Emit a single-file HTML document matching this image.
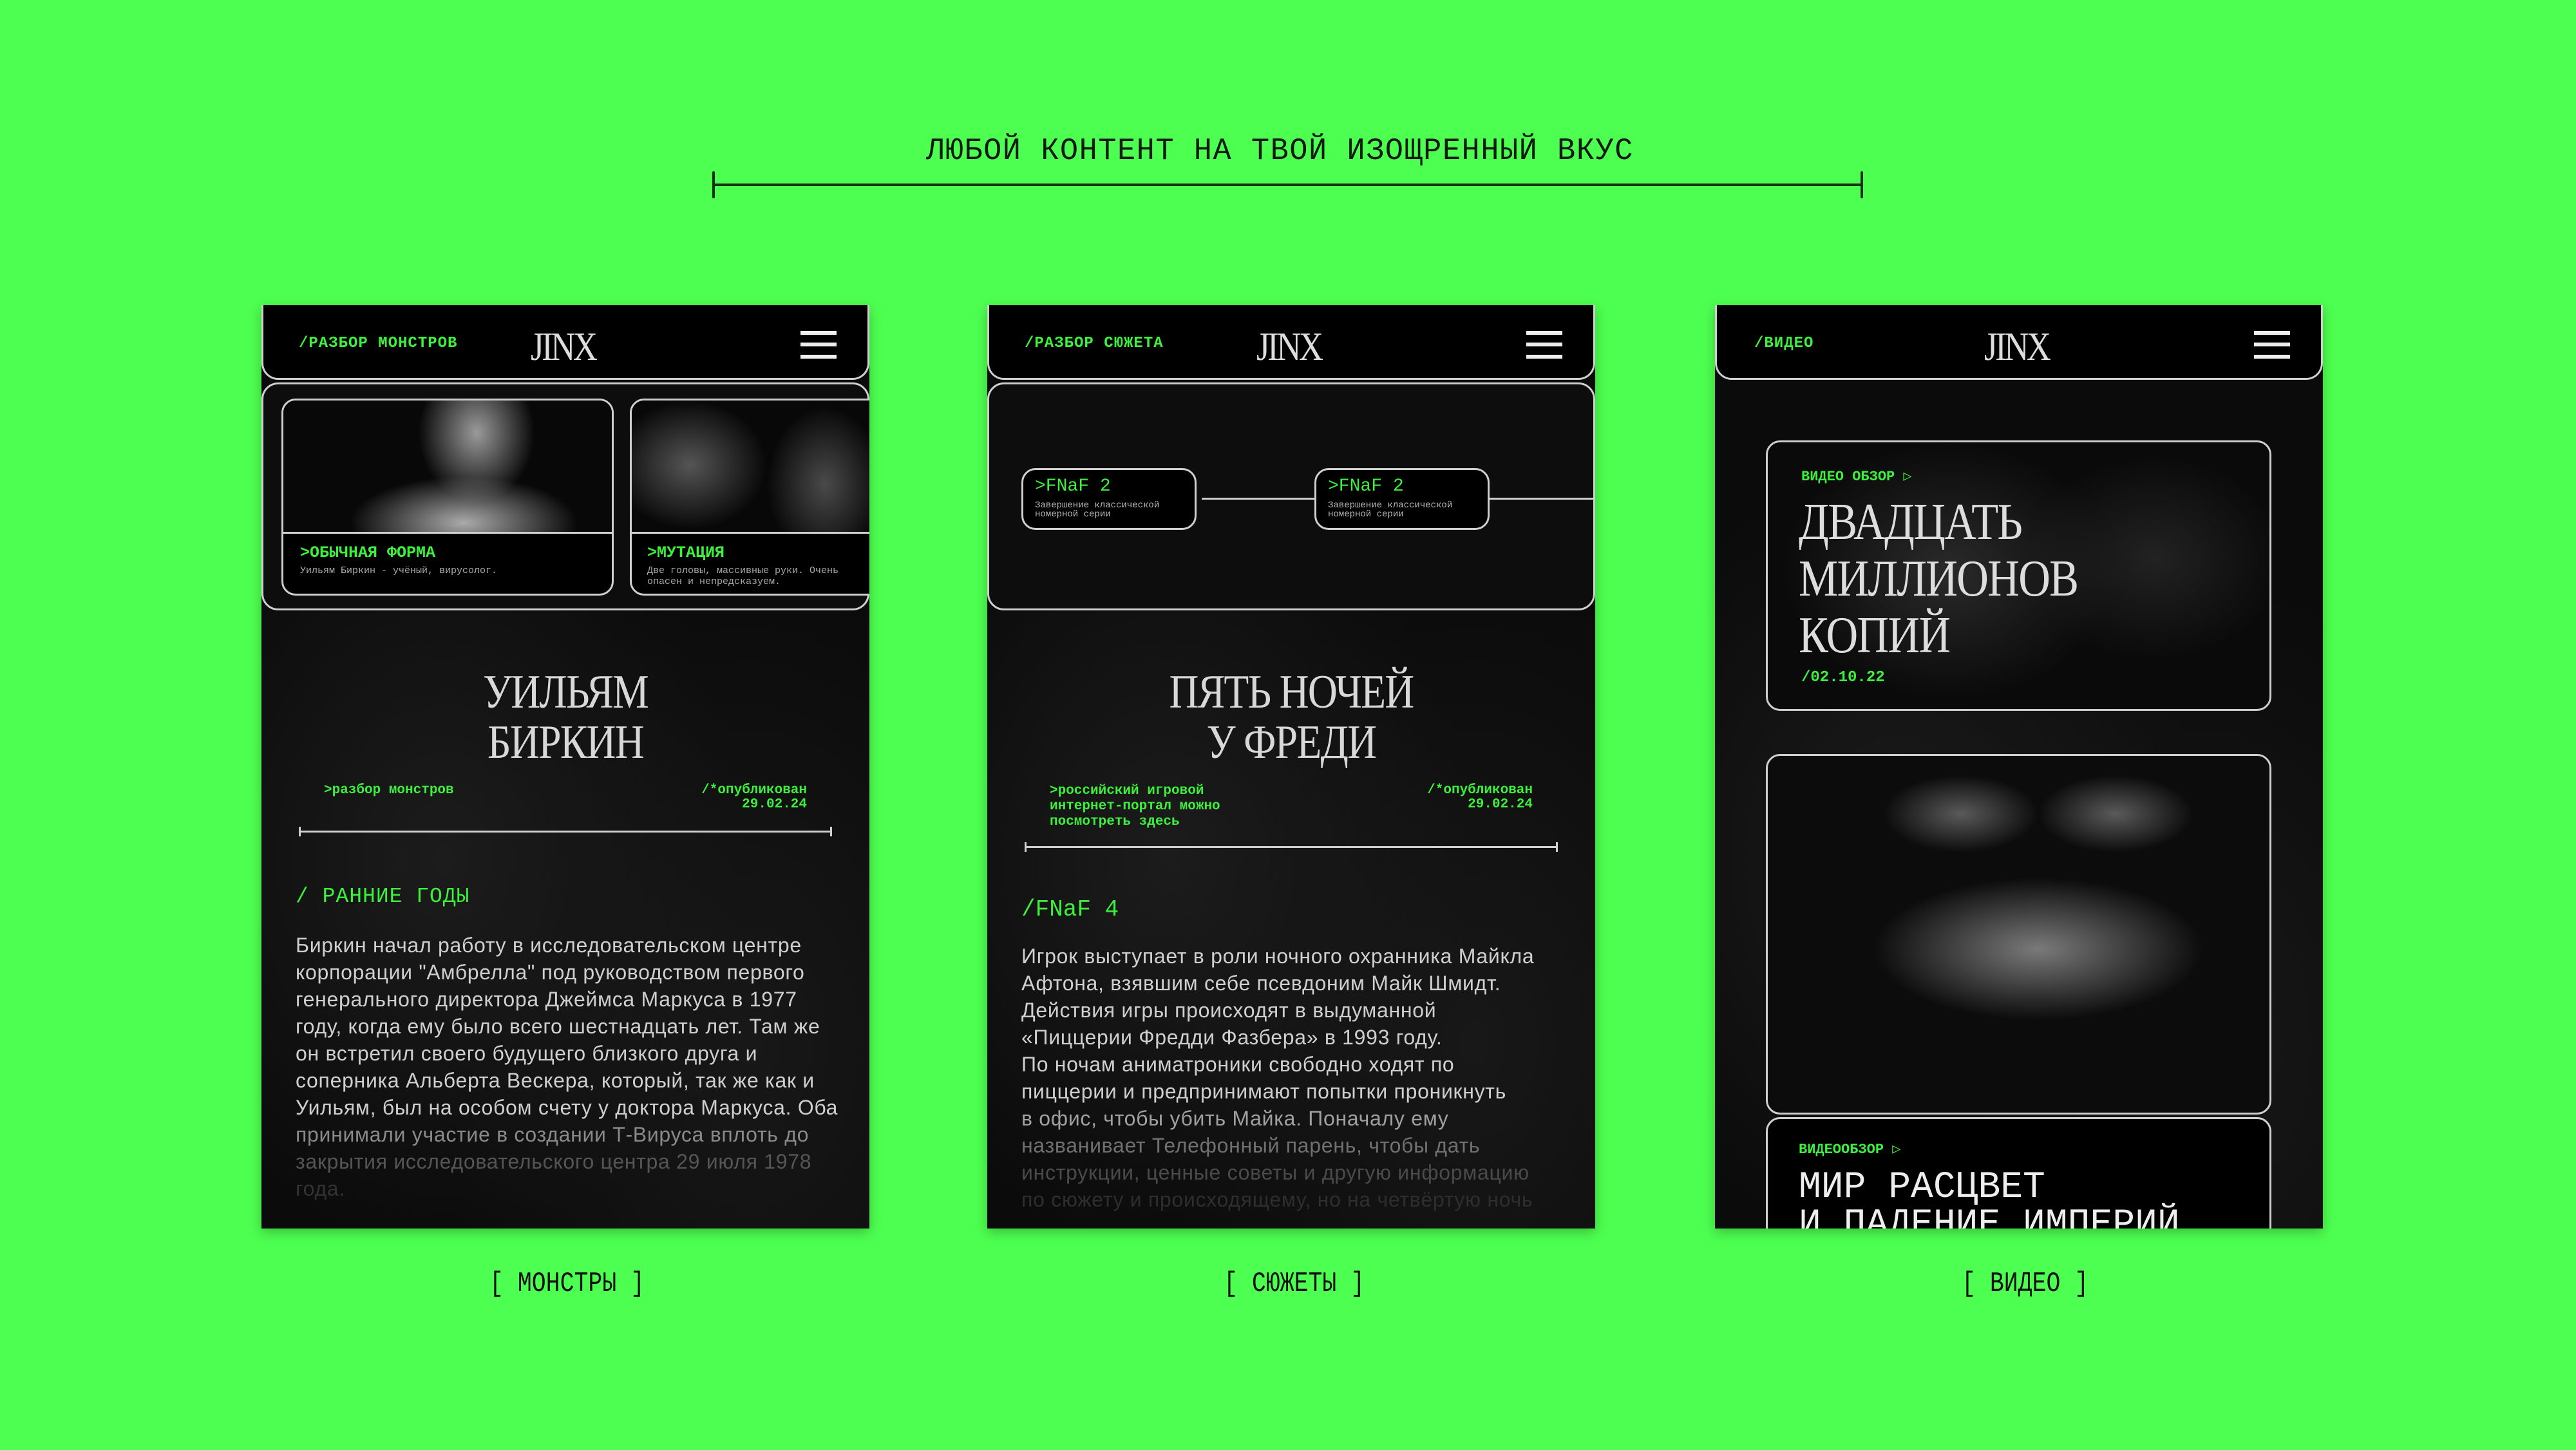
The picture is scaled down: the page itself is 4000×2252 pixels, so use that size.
<!DOCTYPE html>
<html><head><meta charset="utf-8"><style>
*{margin:0;padding:0;box-sizing:border-box}
body{width:4000px;height:2252px;background:#4dff50;position:relative;overflow:hidden;font-family:"Liberation Sans","Noto Sans CJK SC",sans-serif}
.a{position:absolute;white-space:nowrap}
.mono{font-family:"Liberation Mono","DejaVu Sans Mono",monospace}
.g{color:#3cf03c}
.phone{position:absolute;top:474px;width:944px;height:1434px;background:#0b0b0b;overflow:hidden;box-shadow:0 6px 18px rgba(0,0,0,.25);
background-image:radial-gradient(ellipse at 30% 60%,#1c1c1c 0,transparent 50%),radial-gradient(ellipse at 80% 80%,#181818 0,transparent 45%);}
.hdr{position:absolute;left:0;top:0;width:944px;height:116px;background:#000;border-radius:0 0 26px 26px;border:3px solid #cfcfcf;border-top:none}
.hdr .nav{position:absolute;left:55px;top:46px;font-size:24px;font-weight:bold;letter-spacing:1px}
.logo{position:absolute;left:415px;top:30px;font-family:"Liberation Serif",serif;font-size:62px;color:#ddd;letter-spacing:-4px;transform:scaleX(.85);transform-origin:left}
.ham{position:absolute;left:834px;width:56px;height:6px;background:#eee}
.panel{position:absolute;left:0;top:120px;width:944px;height:354px;background:#0d0d0d;border:3px solid #cfcfcf;border-radius:26px}
.title{position:absolute;left:0;width:944px;text-align:center;font-family:"Liberation Serif",serif;color:#d8d8d8;font-size:74px;line-height:78px;letter-spacing:-2px;transform:scaleX(.86)}
.meta{position:absolute;font-size:21px;line-height:22px;font-weight:bold}
.rule{position:absolute;left:58px;width:828px;height:3px;background:#cfcfcf}
.rule:before,.rule:after{content:"";position:absolute;top:-6px;width:3px;height:15px;background:#cfcfcf}
.rule:before{left:0}.rule:after{right:0}
.body{position:absolute;left:53px;font-size:32px;line-height:42px;color:#cfcfcf;letter-spacing:0.7px}
.card{position:absolute;border:3px solid #cfcfcf;border-radius:22px;overflow:hidden;background:#000}
.lbl{position:absolute;font-family:"Liberation Mono",monospace;font-size:44px;color:#111;transform:scaleX(.83);transform-origin:left;white-space:pre}
</style></head><body>

<div class="a mono" style="left:1438px;top:208px;font-size:48px;letter-spacing:1.5px;color:#0e1a0e;transform:scaleX(.98);transform-origin:left">ЛЮБОЙ КОНТЕНТ НА ТВОЙ ИЗОЩРЕННЫЙ ВКУС</div>
<div class="a" style="left:1108px;top:285px;width:1784px;height:4px;background:#123212"></div>
<div class="a" style="left:1106px;top:266px;width:4px;height:42px;background:#123212;border-radius:2px"></div>
<div class="a" style="left:2889px;top:266px;width:4px;height:42px;background:#123212;border-radius:2px"></div>

<!-- PHONE 1 -->
<div class="phone" style="left:406px">
 <div class="hdr"><div class="nav mono g">/РАЗБОР МОНСТРОВ</div><div class="logo">JINX</div>
  <div class="ham" style="top:40px"></div><div class="ham" style="top:58px"></div><div class="ham" style="top:77px"></div></div>
 <div class="panel">
  <div class="card" style="left:28px;top:22px;width:516px;height:306px">
   <div style="position:absolute;left:0;top:0;width:100%;height:204px;background:radial-gradient(ellipse 90px 110px at 300px 50px,#9a9a9a,transparent),radial-gradient(ellipse 220px 90px at 280px 190px,#aaa,transparent 80%),#080808"></div>
   <div style="position:absolute;left:0;top:204px;width:100%;height:3px;background:#cfcfcf"></div>
   <div class="a mono g" style="left:26px;top:222px;font-size:25px;font-weight:bold">&gt;ОБЫЧНАЯ ФОРМА</div>
   <div class="a mono" style="left:26px;top:256px;font-size:15px;color:#aaa">Уильям Биркин - учёный, вирусолог.</div>
  </div>
  <div class="card" style="left:569px;top:22px;width:420px;height:306px">
   <div style="position:absolute;left:0;top:0;width:100%;height:204px;background:radial-gradient(ellipse 120px 100px at 90px 100px,#555,transparent),radial-gradient(ellipse 90px 120px at 300px 130px,#4a4a4a,transparent),#080808"></div>
   <div style="position:absolute;left:0;top:204px;width:100%;height:3px;background:#cfcfcf"></div>
   <div class="a mono g" style="left:24px;top:222px;font-size:25px;font-weight:bold">&gt;МУТАЦИЯ</div>
   <div class="a mono" style="left:24px;top:256px;font-size:15px;line-height:17px;color:#aaa">Две головы, массивные руки. Очень<br>опасен и непредсказуем.</div>
  </div>
 </div>
 <div class="title" style="top:562px">УИЛЬЯМ<br>БИРКИН</div>
 <div class="meta mono g" style="left:97px;top:743px">&gt;разбор монстров</div>
 <div class="meta mono g" style="right:97px;top:743px;text-align:right">/*опубликован<br>29.02.24</div>
 <div class="rule" style="top:816px"></div>
 <div class="a mono g" style="left:53px;top:900px;font-size:33px;letter-spacing:1px">/ РАННИЕ ГОДЫ</div>
 <div class="body" style="top:973px">Биркин начал работу в исследовательском центре<br>корпорации "Амбрелла" под руководством первого<br>генерального директора Джеймса Маркуса в 1977<br>году, когда ему было всего шестнадцать лет. Там же<br>он встретил своего будущего близкого друга и<br>соперника Альберта Вескера, который, так же как и<br>Уильям, был на особом счету у доктора Маркуса. Оба<br><span style="color:#8a8a8a">принимали участие в создании Т-Вируса вплоть до</span><br><span style="color:#555">закрытия исследовательского центра 29 июля 1978</span><br><span style="color:#333">года.</span></div>
</div>

<!-- PHONE 2 -->
<div class="phone" style="left:1533px">
 <div class="hdr"><div class="nav mono g">/РАЗБОР СЮЖЕТА</div><div class="logo">JINX</div>
  <div class="ham" style="top:40px"></div><div class="ham" style="top:58px"></div><div class="ham" style="top:77px"></div></div>
 <div class="panel">
  <div class="a" style="left:330px;top:176px;width:400px;height:3px;background:#cfcfcf"></div>
  <div class="a" style="left:770px;top:176px;width:200px;height:3px;background:#cfcfcf"></div>
  <div class="card" style="left:50px;top:130px;width:272px;height:96px">
   <div class="a mono g" style="left:18px;top:10px;font-size:28px">&gt;FNaF 2</div>
   <div class="a mono" style="left:18px;top:48px;font-size:14px;line-height:14px;color:#bbb">Завершение классической<br>номерной серии</div></div>
  <div class="card" style="left:505px;top:130px;width:272px;height:96px">
   <div class="a mono g" style="left:18px;top:10px;font-size:28px">&gt;FNaF 2</div>
   <div class="a mono" style="left:18px;top:48px;font-size:14px;line-height:14px;color:#bbb">Завершение классической<br>номерной серии</div></div>
 </div>
 <div class="title" style="top:562px">ПЯТЬ НОЧЕЙ<br>У ФРЕДИ</div>
 <div class="meta mono g" style="left:97px;top:743px;line-height:24px">&gt;российский игровой<br>интернет-портал можно<br>посмотреть здесь</div>
 <div class="meta mono g" style="right:97px;top:743px;text-align:right">/*опубликован<br>29.02.24</div>
 <div class="rule" style="top:840px"></div>
 <div class="a mono g" style="left:53px;top:918px;font-size:36px">/FNaF 4</div>
 <div class="body" style="top:990px">Игрок выступает в роли ночного охранника Майкла<br>Афтона, взявшим себе псевдоним Майк Шмидт.<br>Действия игры происходят в выдуманной<br>«Пиццерии Фредди Фазбера» в 1993 году.<br>По ночам аниматроники свободно ходят по<br>пиццерии и предпринимают попытки проникнуть<br><span style="color:#a0a0a0">в офис, чтобы убить Майка. Поначалу ему</span><br><span style="color:#707070">названивает Телефонный парень, чтобы дать</span><br><span style="color:#4a4a4a">инструкции, ценные советы и другую информацию</span><br><span style="color:#2e2e2e">по сюжету и происходящему, но на четвёртую ночь</span></div>
</div>

<!-- PHONE 3 -->
<div class="phone" style="left:2663px">
 <div class="hdr"><div class="nav mono g" style="left:58px">/ВИДЕО</div><div class="logo">JINX</div>
  <div class="ham" style="top:40px"></div><div class="ham" style="top:58px"></div><div class="ham" style="top:77px"></div></div>
 <div class="card" style="left:79px;top:210px;width:785px;height:420px;background:radial-gradient(ellipse 260px 200px at 280px 200px,#2a2a2a,transparent),radial-gradient(ellipse 200px 160px at 600px 180px,#222,transparent),#0a0a0a">
  <div class="a mono g" style="left:52px;top:40px;font-size:22px;font-weight:bold">ВИДЕО ОБЗОР ▷</div>
  <div class="a" style="left:48px;top:80px;font-family:'Liberation Serif',serif;font-size:80px;line-height:88px;color:#ddd;letter-spacing:-2px;transform:scaleX(.86);transform-origin:left">ДВАДЦАТЬ<br>МИЛЛИОНОВ<br>КОПИЙ</div>
  <div class="a mono g" style="left:52px;top:352px;font-size:24px;font-weight:bold">/02.10.22</div>
 </div>
 <div class="card" style="left:79px;top:697px;width:785px;height:560px;background:radial-gradient(ellipse 300px 130px at 420px 300px,#7a7a7a,transparent 85%),radial-gradient(ellipse 120px 60px at 300px 90px,#5a5a5a,transparent),radial-gradient(ellipse 120px 60px at 540px 90px,#5a5a5a,transparent),radial-gradient(ellipse 80px 40px at 420px 380px,#0a0a0a,transparent),#0c0c0c"></div>
 <div class="card" style="left:79px;top:1261px;width:785px;height:260px">
  <div class="a mono g" style="left:48px;top:34px;font-size:22px;font-weight:bold">ВИДЕООБЗОР ▷</div>
  <div class="a mono" style="left:48px;top:78px;font-size:58px;line-height:58px;color:#eee">МИР РАСЦВЕТ<br>И ПАДЕНИЕ ИМПЕРИЙ</div>
 </div>
</div>

<div class="lbl" style="left:760px;top:1969px">[ МОНСТРЫ ]</div>
<div class="lbl" style="left:1900px;top:1969px">[ СЮЖЕТЫ ]</div>
<div class="lbl" style="left:3046px;top:1969px">[ ВИДЕО ]</div>
</body></html>
